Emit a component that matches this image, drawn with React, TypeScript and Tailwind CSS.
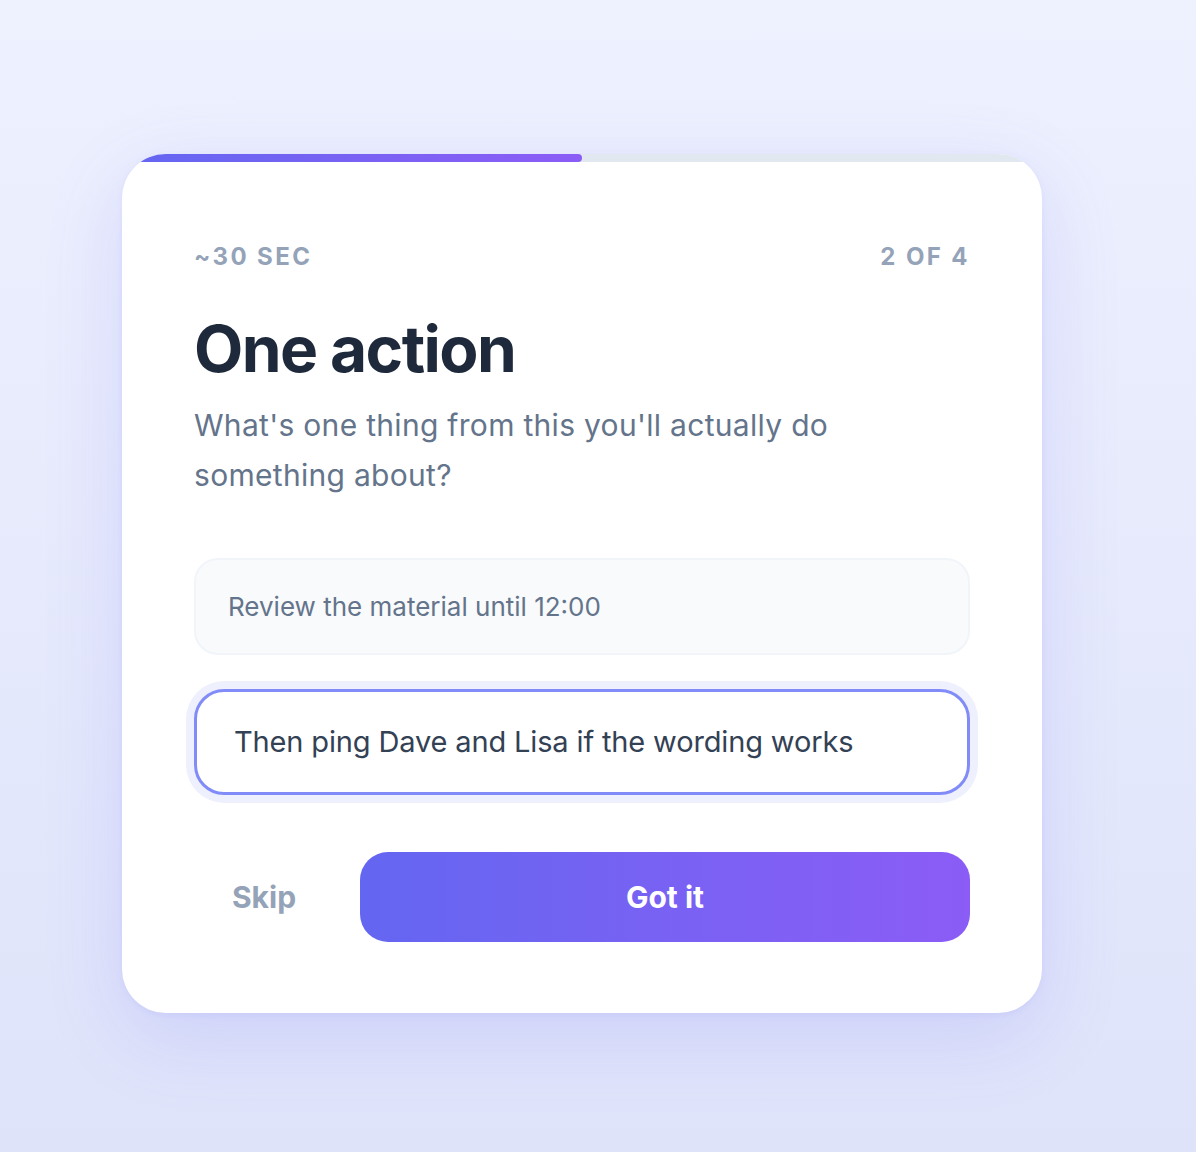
import React from "react";

export default function App() {
  return (
    <div
      className="min-h-screen w-full bg-gradient-to-b from-[#eef1fe] to-[#dfe3fa] pt-[154px] pl-[122px] pb-[139px]"
      style={{ fontFamily: "Inter, 'Noto Sans', sans-serif" }}
    >
      <div className="w-[920px] h-[859px] bg-white rounded-[44px] overflow-hidden shadow-[0_24px_80px_rgba(99,102,241,0.16),0_2px_6px_rgba(99,102,241,0.08)]">
        <div className="h-2 bg-[#e2e8f0]">
          <div className="h-full w-1/2 rounded-r-full bg-gradient-to-r from-[#6366f1] to-[#8b5cf6]" />
        </div>
        <div className="px-[72px] pt-[79px]">
          <div className="flex justify-between text-[24px] leading-[32px] font-bold tracking-[0.1em] text-[#94a3b8]">
            <span>~30 SEC</span>
            <span>2 OF 4</span>
          </div>
          <h1 className="mt-[40px] text-[64px] leading-[72px] font-bold tracking-[-0.025em] text-[#1e293b]">
            One action
          </h1>
          <p className="mt-[15px] text-[30px] leading-[50px] tracking-[0.01em] text-[#64748b]">
            What's one thing from this you'll actually do something about?
          </p>
          <div className="mt-[58px] h-[97px] flex items-center rounded-[24px] border-2 border-[#f1f5f9] bg-[#f8fafc] px-[32px] text-[26px] text-[#64748b]">
            Review the material until 12:00
          </div>
          <div className="mt-[34px] h-[106px] flex items-center rounded-[30px] border-[3px] border-[#818cf8] bg-white pl-[37px] text-[29px] tracking-[-0.005em] text-[#334155] shadow-[0_0_0_8px_#eff0fe]">
            Then ping Dave and Lisa if the wording works
          </div>
          <div className="mt-[57px] flex items-center gap-[26px]">
            <button className="w-[140px] h-[90px] text-center text-[30px] font-bold text-[#94a3b8]">
              Skip
            </button>
            <button className="flex-1 h-[90px] rounded-[28px] bg-gradient-to-r from-[#6366f1] to-[#8b5cf6] text-[30px] font-bold text-white">
              Got it
            </button>
          </div>
        </div>
      </div>
    </div>
  );
}
